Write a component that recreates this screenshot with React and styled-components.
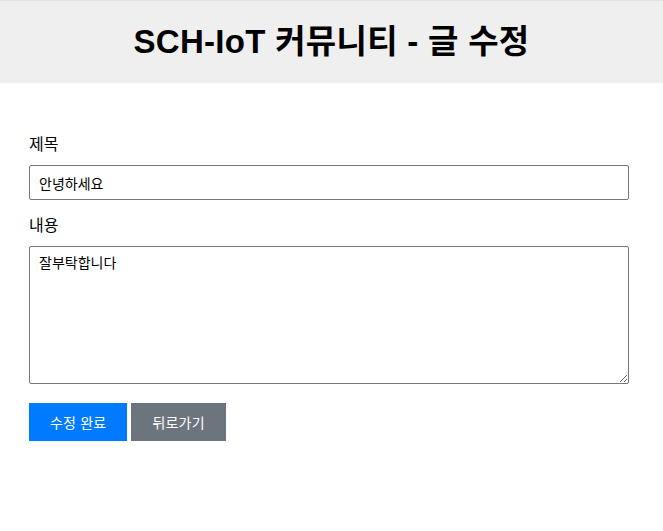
import React from 'react';
import styled, { createGlobalStyle } from 'styled-components';

const GlobalStyle = createGlobalStyle`
    body {
        margin: 0;
        background: #FFFFFF;
        font-family: "Liberation Sans", Arial, "Noto Sans CJK KR", sans-serif;
        color: #000000;
    }
`

const Header = styled.header`
    background: #EFEFEF;
    border-top: 1px solid #E2E2E2;
    padding: 22px 0 23px;
    text-align: center;
`

const Title = styled.h1`
    margin: 0;
    font-size: 33px;
    line-height: 37px;
    font-weight: 700;
    letter-spacing: 0.3px;
`

const Main = styled.main`
    padding: 50px 29px 0;
`

const Form = styled.form`
    width: 600px;
    display: flex;
    flex-direction: column;
`

const Label = styled.label`
    display: block;
    font-size: 16px;
    line-height: 24px;
    margin-bottom: 8px;
`

const Input = styled.input`
    box-sizing: border-box;
    width: 100%;
    height: 35px;
    padding: 0 9px;
    margin-bottom: 14px;
    border: 1px solid #767676;
    border-radius: 2px;
    font-family: inherit;
    font-size: 14px;
    color: #000000;
    outline: none;
`

const Textarea = styled.textarea`
    box-sizing: border-box;
    width: 100%;
    height: 138px;
    padding: 8px 9px;
    border: 1px solid #767676;
    border-radius: 2px;
    font-family: inherit;
    font-size: 14px;
    line-height: 17px;
    color: #000000;
    outline: none;
`

const Actions = styled.div`
    display: flex;
    gap: 4px;
    margin-top: 19px;
`

const Button = styled.button`
    height: 38px;
    padding: 0 21px;
    border: none;
    border-radius: 0;
    background: ${props => props.$variant === 'secondary' ? '#6C757D' : '#007BFF'};
    color: #FFFFFF;
    font-family: inherit;
    font-size: 14px;
    letter-spacing: 0.2px;
    cursor: pointer;
`

const App = () => {
    return (
        <>
            <GlobalStyle />
            <Header>
                <Title>SCH-IoT 커뮤니티 - 글 수정</Title>
            </Header>
            <Main>
                <Form onSubmit={e => e.preventDefault()}>
                    <Label htmlFor='title'>제목</Label>
                    <Input id='title' defaultValue='안녕하세요' />
                    <Label htmlFor='content'>내용</Label>
                    <Textarea id='content' defaultValue='잘부탁합니다' />
                    <Actions>
                        <Button type='submit'>수정 완료</Button>
                        <Button type='button' $variant='secondary'>뒤로가기</Button>
                    </Actions>
                </Form>
            </Main>
        </>
    )
}

export default App
